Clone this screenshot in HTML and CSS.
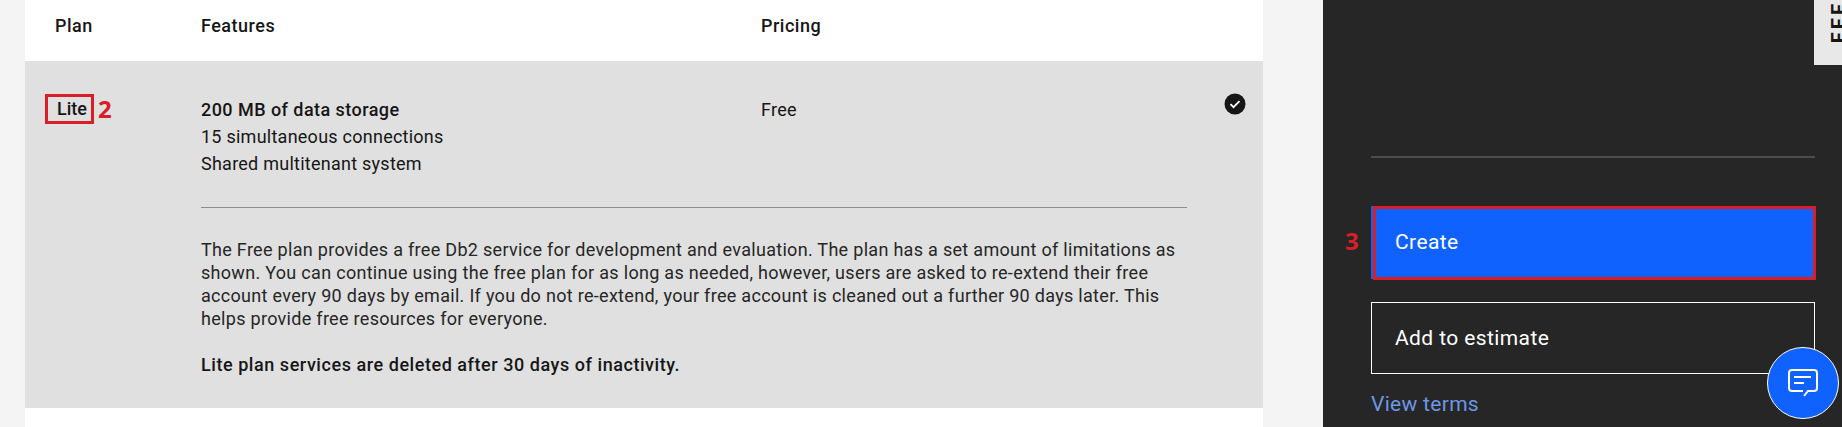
FILE: index.html
```html
<!DOCTYPE html>
<html lang="en">

<head>
    <meta charset="UTF-8">
    <meta name="viewport" content="width=device-width, initial-scale=1.0">
    <link rel="stylesheet" href="styles.css">
    <title>Create service</title>
</head>

<body>

    <main class="plans">
        <div class="plans-head">
            <div>Plan</div>
            <div>Features</div>
            <div>Pricing</div>
        </div>

        <div class="plan-row">
            <div class="plan-name">
                <span class="mark-box">Lite</span>
                <span class="mark-num">2</span>
            </div>
            <ul class="plan-features">
                <li class="strong">200 MB of data storage</li>
                <li>15 simultaneous connections</li>
                <li>Shared multitenant system</li>
            </ul>
            <div class="plan-price">Free</div>
            <div class="plan-check">
                <svg width="22" height="22" viewBox="0 0 22 22">
                    <circle cx="11" cy="11" r="10.5" fill="#161616"></circle>
                    <path d="M6.5 11.2l3 3 6-6" fill="none" stroke="#fff" stroke-width="1.8"></path>
                </svg>
            </div>
            <div class="plan-details">
                <p>The Free plan provides a free Db2 service for development and evaluation. The plan has a set amount of limitations as shown. You can continue using the free plan for as long as needed, however, users are asked to re-extend their free account every 90 days by email. If you do not re-extend, your free account is cleaned out a further 90 days later. This helps provide free resources for everyone.</p>
                <p class="strong">Lite plan services are deleted after 30 days of inactivity.</p>
            </div>
        </div>

        <div class="plans-rest"></div>
    </main>

    <aside class="summary">
        <hr class="summary-rule">
        <div class="create-wrap">
            <span class="mark-num create-num">3</span>
            <a class="btn btn-primary">Create</a>
        </div>
        <a class="btn btn-outline">Add to estimate</a>
        <a class="terms">View terms</a>
    </aside>

    <div class="feedback-tab"><span>FEEDBACK</span></div>

    <button class="chat-fab">
        <svg width="32" height="32" viewBox="0 0 32 32" fill="none" stroke="#fff" stroke-width="2">
            <path d="M16 24H5a3 3 0 0 1-3-3V6a3 3 0 0 1 3-3h22a3 3 0 0 1 3 3v15a3 3 0 0 1-3 3h-6l-4 5"></path>
            <path d="M7 10h17M7 16h10"></path>
        </svg>
    </button>

</body>

</html>
```

FILE: styles.css
```css
* {
    box-sizing: border-box;
}

html,
body {
    margin: 0;
    height: 427px;
    overflow: hidden;
}

body {
    display: flex;
    background-color: #f4f4f4;
    color: #161616;
    font-family: 'Roboto', sans-serif;
    font-size: 18px;
}

.strong {
    font-weight: 500;
    letter-spacing: 0.45px;
}

.plans {
    width: 1323px;
    padding: 0 60px 0 25px;
    display: flex;
    flex-direction: column;
}

.plans-head {
    height: 61px;
    padding: 0 0 10px 30px;
    display: grid;
    grid-template-columns: 146px 560px 1fr;
    align-items: center;
    background-color: #fff;
    font-weight: 500;
    letter-spacing: 0.5px;
}

.plan-row {
    height: 347px;
    padding: 33px 0 0 20px;
    display: grid;
    grid-template-columns: 156px 560px 1fr 39px;
    grid-template-rows: 113px auto;
    background-color: #e0e0e0;
}

.plan-name {
    display: flex;
    align-items: flex-start;
    gap: 4px;
}

.mark-box {
    width: 49px;
    height: 30px;
    padding-left: 9px;
    border: 3px solid #da1e28;
    font-weight: 500;
    line-height: 24px;
}

.mark-num {
    color: #da1e28;
    font-family: 'Open Sans', sans-serif;
    font-size: 24px;
    font-weight: 700;
    line-height: 30px;
}

.plan-features {
    margin: 0;
    padding: 2px 0 0;
    list-style: none;
    line-height: 27px;
    letter-spacing: 0.25px;
}

.plan-price {
    padding-top: 2px;
    line-height: 27px;
    letter-spacing: 0.25px;
}

.plan-check {
    line-height: 0;
    margin-top: -1px;
}

.plan-details {
    grid-column: 2 / 5;
    margin-right: 76px;
    padding-top: 30px;
    border-top: 1px solid #8d8d8d;
    color: #262626;
    line-height: 23px;
    letter-spacing: 0.3px;
}

.plan-details p {
    margin: 0 0 23px;
}

.plan-details .strong {
    color: #161616;
    letter-spacing: 0.55px;
}

.plans-rest {
    flex: 1;
    background-color: #fff;
}

.summary {
    flex: 1;
    padding: 156px 27px 0 48px;
    background-color: #262626;
    color: #fff;
}

.summary-rule {
    height: 2px;
    margin: 0 0 48px;
    border: none;
    background-color: #4c4c4c;
}

.create-wrap {
    position: relative;
}

.btn {
    display: flex;
    align-items: center;
    padding: 0 0 2px 24px;
    font-size: 21px;
    letter-spacing: 0.4px;
}

.btn-primary {
    position: relative;
    height: 73px;
    background-color: #0f62fe;
}

.btn-primary::after {
    content: '';
    position: absolute;
    top: 0;
    left: 2px;
    right: -1px;
    bottom: -1px;
    border: 3px solid #da1e28;
}

.create-num {
    position: absolute;
    left: -26px;
    top: 20px;
}

.btn-outline {
    height: 72px;
    margin-top: 23px;
    padding: 0 0 0 23px;
    border: 1px solid #fff;
}

.terms {
    display: block;
    margin-top: 18px;
    color: #6d97e6;
    font-size: 21px;
    letter-spacing: 0.3px;
}

.feedback-tab {
    position: absolute;
    top: 0;
    right: 0;
    width: 28px;
    height: 65px;
    padding: 0 0 22px 15px;
    overflow: hidden;
    display: flex;
    align-items: flex-end;
    background-color: #e8e8e8;
}

.feedback-tab span {
    writing-mode: vertical-rl;
    transform: rotate(180deg);
    font-size: 20px;
    font-weight: 700;
    letter-spacing: 3px;
    white-space: nowrap;
    line-height: 20px;
}

.chat-fab {
    position: absolute;
    left: 1767px;
    top: 347px;
    width: 72px;
    height: 72px;
    padding: 0;
    display: flex;
    align-items: center;
    justify-content: center;
    border: 1px solid #fff;
    border-radius: 50%;
    background-color: #0f62fe;
}
```
